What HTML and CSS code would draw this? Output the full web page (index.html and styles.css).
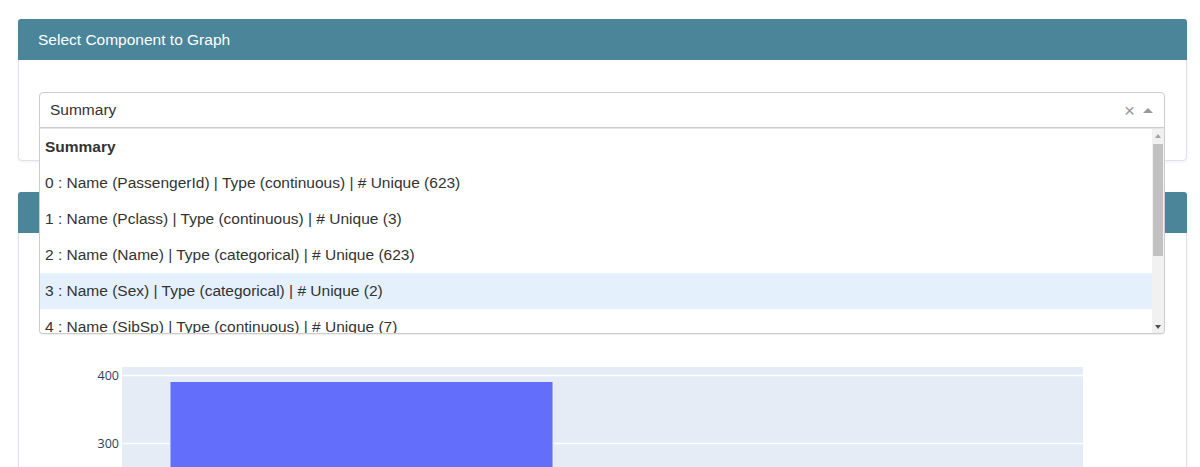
FILE: index.html
```html
<!DOCTYPE html>
<html lang="en">
<head>
    <meta charset="UTF-8">
    <meta name="viewport" content="width=device-width, initial-scale=1.0">
    <title>Component Graph</title>
    <link rel="stylesheet" href="styles.css">
</head>
<body>
    <div class="page">
        <div class="card card-select">
            <div class="card-header">Select Component to Graph</div>
            <div class="card-body">
                <div class="dropdown">
                    <div class="control">
                        <span class="control-value">Summary</span>
                        <span class="control-clear">&times;</span>
                        <span class="control-arrow"></span>
                    </div>
                    <div class="menu">
                        <div class="menu-list">
                            <div class="option option-selected">Summary</div>
                            <div class="option">0 : Name (PassengerId) | Type (continuous) | # Unique (623)</div>
                            <div class="option">1 : Name (Pclass) | Type (continuous) | # Unique (3)</div>
                            <div class="option">2 : Name (Name) | Type (categorical) | # Unique (623)</div>
                            <div class="option option-focused">3 : Name (Sex) | Type (categorical) | # Unique (2)</div>
                            <div class="option">4 : Name (SibSp) | Type (continuous) | # Unique (7)</div>
                        </div>
                        <div class="scrollbar">
                            <span class="scroll-up"></span>
                            <span class="scroll-thumb"></span>
                            <span class="scroll-down"></span>
                        </div>
                    </div>
                </div>
            </div>
        </div>

        <div class="card">
            <div class="card-header card-header-empty"></div>
            <div class="card-body">
                <svg class="graph" width="1126" height="230" viewBox="0 0 1126 230">
                    <!-- plot area -->
                    <rect x="83" y="102" width="961" height="128" fill="#e5ecf6"/>
                    <line x1="83" x2="1044" y1="110.5" y2="110.5" stroke="#fff" stroke-width="1.5"/>
                    <line x1="83" x2="1044" y1="178.5" y2="178.5" stroke="#fff" stroke-width="1.5"/>
                    <!-- bars -->
                    <rect x="131" y="116.5" width="383" height="120" fill="#636efa" stroke="#e5ecf6" stroke-width="1"/>
                    <!-- y axis ticks -->
                    <text class="tick" x="80" y="115" text-anchor="end">400</text>
                    <text class="tick" x="80" y="183" text-anchor="end">300</text>
                </svg>
            </div>
        </div>
    </div>
</body>
</html>
```

FILE: styles.css
```css
body {
    margin: 0;
    padding: 0;
    background: #fff;
    color: #333;
    font-family: "Liberation Sans", Arial, sans-serif;
}

.page {
    padding: 19px 13px 0 18px;
}

.card {
    border: 1px solid #dfe0ea;
    border-radius: 4px;
    box-shadow: 0 1px 3px rgba(60, 60, 100, 0.08);
    background: #fff;
    margin-bottom: 31px;
}

.card-select {
    position: relative;
    z-index: 2;
}

.card-header {
    background: #4a8599;
    color: #fff;
    font-size: 15.5px;
    line-height: 19px;
    padding: 11px 20px 11px 20px;
    margin: -1px -1px 0 -1px;
    border-radius: 3px 3px 0 0;
}

.card-header-empty {
    height: 19px;
}

.card-body {
    padding: 32px 21px 32px 20px;
}

.dropdown {
    position: relative;
}

.control {
    display: flex;
    align-items: center;
    height: 34px;
    border: 1px solid #ccc;
    border-radius: 4px 4px 0 0;
    padding: 0 10px;
    background: #fff;
}

.control-value {
    flex: 1;
    font-size: 15.5px;
    color: #333;
}

.control-clear {
    color: #999;
    font-size: 19px;
    line-height: 1;
    width: 17px;
    text-align: center;
    margin-right: 5px;
}

.control-arrow {
    width: 0;
    height: 0;
    border-left: 5px solid transparent;
    border-right: 5px solid transparent;
    border-bottom: 5px solid #999;
    margin-right: 1px;
}

.menu {
    position: absolute;
    top: 100%;
    left: 0;
    right: 0;
    height: 204px;
    background: #fff;
    border: 1px solid #ccc;
    border-top: 1px solid #e6e6e6;
    border-radius: 0 0 4px 4px;
    box-shadow: 0 1px 0 rgba(0, 0, 0, 0.06);
    overflow: hidden;
    display: flex;
}

.menu-list {
    flex: 1;
}

.option {
    height: 36px;
    line-height: 36px;
    padding: 0 5px;
    font-size: 15.5px;
    color: #333;
    white-space: nowrap;
}

.option-selected {
    font-weight: bold;
}

.option-focused {
    background: #e4f0fc;
}

.scrollbar {
    width: 12px;
    background: #f1f1f1;
    display: flex;
    flex-direction: column;
    align-items: center;
}

.scroll-up,
.scroll-down {
    width: 0;
    height: 0;
    border-left: 3.5px solid transparent;
    border-right: 3.5px solid transparent;
}

.scroll-up {
    border-bottom: 4px solid #a3a3a3;
    margin: 5px 0 6px;
}

.scroll-down {
    border-top: 4px solid #505050;
    margin: auto 0 4px;
}

.scroll-thumb {
    width: 10px;
    height: 112px;
    background: #c1c1c1;
}

.graph {
    display: block;
}

.tick {
    font-family: "Open Sans", Verdana, sans-serif;
    font-size: 12.5px;
    fill: #2a3f5f;
}
```
